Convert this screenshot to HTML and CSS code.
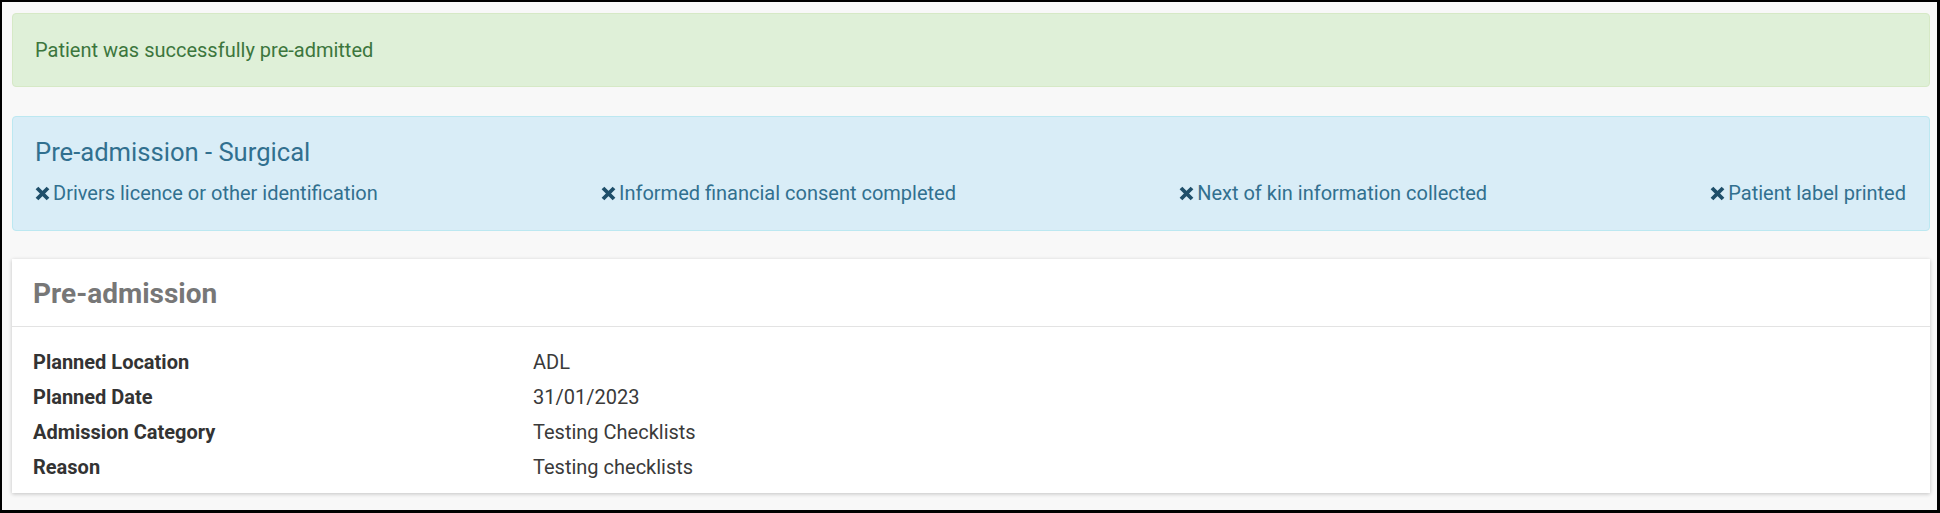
FILE: index.html
```html
<!DOCTYPE html>
<html lang="en">
<head>
<meta charset="utf-8">
<title>Pre-admission</title>
<link rel="stylesheet" href="styles.css">
</head>
<body>
<div class="frame">
  <div class="alert-success">Patient was successfully pre-admitted</div>

  <div class="alert-info">
    <div class="info-title">Pre-admission - Surgical</div>
    <div class="checklist">
      <span class="check-item"><svg class="x-icon" viewBox="0 0 12 12"><path d="M1.6 1.6 L10.4 10.4 M10.4 1.6 L1.6 10.4"/></svg>Drivers licence or other identification</span>
      <span class="check-item"><svg class="x-icon" viewBox="0 0 12 12"><path d="M1.6 1.6 L10.4 10.4 M10.4 1.6 L1.6 10.4"/></svg>Informed financial consent completed</span>
      <span class="check-item"><svg class="x-icon" viewBox="0 0 12 12"><path d="M1.6 1.6 L10.4 10.4 M10.4 1.6 L1.6 10.4"/></svg>Next of kin information collected</span>
      <span class="check-item"><svg class="x-icon" viewBox="0 0 12 12"><path d="M1.6 1.6 L10.4 10.4 M10.4 1.6 L1.6 10.4"/></svg>Patient label printed</span>
    </div>
  </div>

  <div class="panel">
    <div class="panel-header">Pre-admission</div>
    <div class="panel-body">
      <div class="row"><span class="label">Planned Location</span><span class="value">ADL</span></div>
      <div class="row"><span class="label">Planned Date</span><span class="value">31/01/2023</span></div>
      <div class="row"><span class="label">Admission Category</span><span class="value">Testing Checklists</span></div>
      <div class="row"><span class="label">Reason</span><span class="value">Testing checklists</span></div>
    </div>
  </div>
</div>
</body>
</html>
```

FILE: styles.css
```css
html, body {
  margin: 0;
  padding: 0;
  background: #ffffff;
}

.frame {
  width: 1940px;
  height: 513px;
  box-sizing: border-box;
  border-style: solid;
  border-color: #000000;
  border-width: 2px 3px 3px 2px;
  background: #f8f8f8;
  padding: 11px 7px 0 10px;
  font-family: Roboto, "Liberation Sans", Arial, sans-serif;
  display: flex;
  flex-direction: column;
  overflow: hidden;
}

.alert-success {
  height: 74px;
  box-sizing: border-box;
  background: #dff0d8;
  border: 1px solid #d6e9c6;
  border-radius: 4px;
  color: #3c763d;
  font-size: 20px;
  line-height: 1.2;
  padding: 0 22px;
  display: flex;
  align-items: center;
}

.alert-info {
  margin-top: 29px;
  height: 115px;
  box-sizing: border-box;
  background: #d9edf7;
  border: 1px solid #bce8f1;
  border-radius: 4px;
  color: #31708f;
  padding: 21px 23px 0 22px;
  display: flex;
  flex-direction: column;
}

.info-title {
  font-size: 25.6px;
  line-height: 28px;
}

.checklist {
  margin-top: 16px;
  display: flex;
  justify-content: space-between;
  font-size: 20px;
  line-height: 23px;
}

.check-item {
  display: flex;
  align-items: center;
}

.x-icon {
  width: 15px;
  height: 15px;
  margin-right: 3px;
  fill: none;
  stroke: #1f4f6a;
  stroke-width: 3.1;
  stroke-linecap: butt;
}

.panel {
  margin-top: 28px;
  height: 234px;
  box-sizing: border-box;
  background: #ffffff;
  box-shadow: 0 1px 4px rgba(0, 0, 0, 0.22);
  display: flex;
  flex-direction: column;
}

.panel-header {
  height: 68px;
  box-sizing: border-box;
  border-bottom: 1px solid #e3e3e3;
  padding: 19px 21px 0 21px;
  font-size: 28px;
  line-height: 31px;
  font-weight: 700;
  color: #777777;
}

.panel-body {
  padding: 18px 21px 0 21px;
  display: flex;
  flex-direction: column;
}

.row {
  display: grid;
  grid-template-columns: 500px 1fr;
  height: 35px;
  line-height: 35px;
  font-size: 20px;
}

.label {
  font-weight: 700;
  color: #333333;
}

.value {
  color: #3a3a3a;
}
```
